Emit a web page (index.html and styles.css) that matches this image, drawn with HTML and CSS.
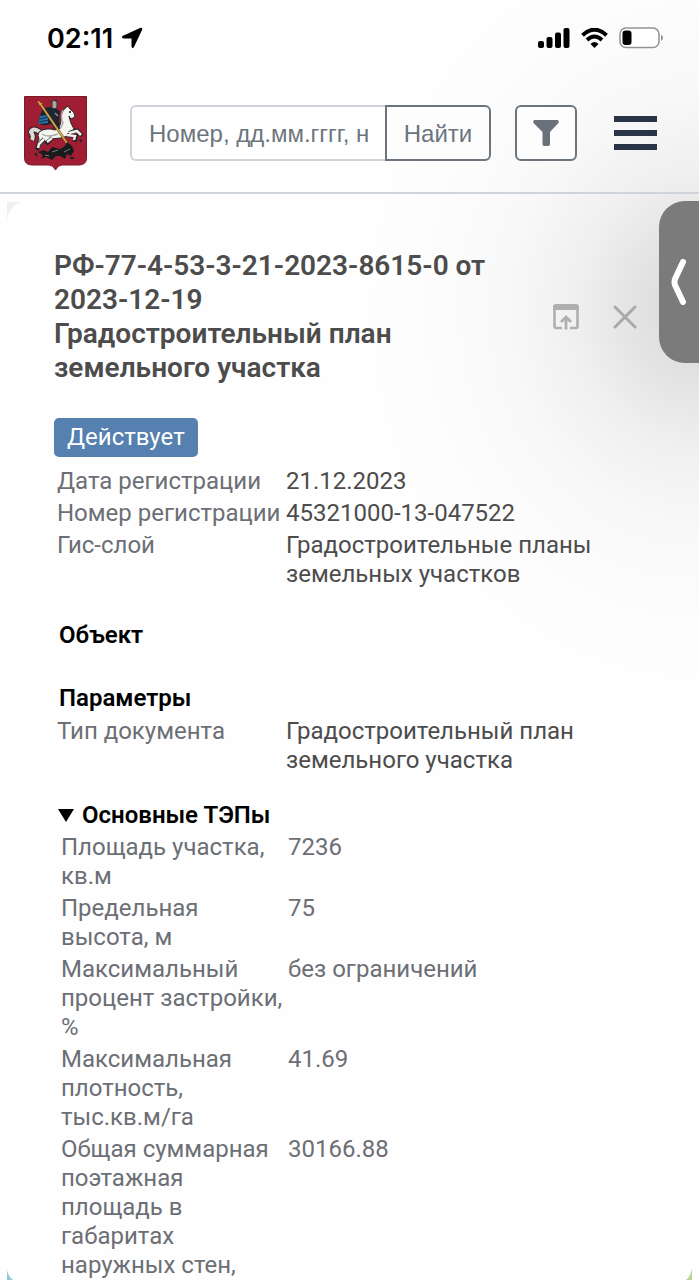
FILE: index.html
```html
<!DOCTYPE html>
<html lang="ru">
<head>
<meta charset="utf-8">
<meta name="viewport" content="width=device-width, initial-scale=1">
<title>Градостроительный план земельного участка</title>
<link rel="stylesheet" href="styles.css">
</head>
<body>
<div class="page">
  <div class="status">
    <div class="status-time">
      <span>02:11</span>
      <svg width="22" height="22" viewBox="0 0 22 22" aria-hidden="true"><path d="M19 1Q22 0 21 3L13 20Q11.500 22.500 10.500 19.500V11.500H2.500Q0 11 1.500 9Z"/></svg>
    </div>
    <div class="status-icons">
      <svg width="32" height="20" viewBox="0 0 32 20" aria-hidden="true"><rect y="13" width="6" height="7" rx="2"/><rect x="8.500" y="9" width="6" height="11" rx="2"/><rect x="17" y="4.500" width="6" height="15.500" rx="2"/><rect x="25.500" width="6" height="20" rx="2"/></svg>
      <svg width="27" height="20" viewBox="0 0 27 20" aria-hidden="true"><path d="M1.500 7.200Q13.500 -3.800 25.500 7.200" fill="none" stroke="#000" stroke-width="4"/><path d="M6 12Q13.500 5 21 12" fill="none" stroke="#000" stroke-width="3.800"/><path d="M9.500 16Q13.500 12 17.500 16L13.500 20Z"/></svg>
      <svg width="45" height="22" viewBox="0 0 45 22" aria-hidden="true"><rect x="1" y="1" width="39" height="19.500" rx="6" fill="#fff" stroke="#929292" stroke-width="1.500"/><rect x="3.500" y="3.500" width="9" height="14.500" rx="3"/><path d="M42 7.500Q46 10.500 42 14Z" fill="#929292"/></svg>
    </div>
  </div>

  <header class="header">
    <a class="crest" href="#" aria-label="Москва">
      <svg width="63" height="75" viewBox="0 0 63 75" aria-hidden="true">
        <path d="M.5.500H62.500V62Q62.500 69 55 69H38Q34 69 31.500 74Q29 69 25 69H8Q.5 69 .5 62Z" fill="#9f1e34" stroke="#7c1a2c"/>
        <path d="M16 36Q9 31 7 36Q10 40 8 44" fill="none" stroke="#2a2526" stroke-width="6"/>
        <path d="M16 36Q9 31 7 36Q10 40 8 44" fill="none" stroke="#dcdad6" stroke-width="4"/>
        <path d="M15 36Q22 31 31 34Q37 32 37 23Q37 14 44 10L46 13Q51 16 51 21L47 23L45 20Q46 27 50 33L47 39L37 42L26 43L20 46L14 53L12 50L15 43Q13 39 15 36Z" fill="#f5f5f2" stroke="#252525"/>
        <path d="M39 14Q36 21 39 27L36 33M18 38Q23 42 34 38" fill="none" stroke="#aaa" stroke-width="1.500"/>
        <circle cx="46" cy="16" r="1"/>
        <path d="M45 37L53 34L58 40M43 39L52 40L51 46M20 43L15 48L13 54M28 42L22 48" fill="none" stroke="#242424" stroke-width="4"/>
        <path d="M45 37L53 35L57 39M43 39L51 40L50 44M20 43L15 48L14 52M28 42L23 46" fill="none" stroke="#f0efeb" stroke-width="2.500"/>
        <path d="M18 14Q24 9 31 12L36 15L35 24L36 33L30 33L28 28L22 29Q13 30 15 23Z" fill="#1b2630"/>
        <path d="M16 20L24 19L24 27L14 28Z" fill="#2b70a3"/>
        <path d="M16 23L24 21M15 26L25 24" stroke="#14304a"/>
        <path d="M28 12V6L30 4L33 6V11L31 13Z" fill="#aaa39e" stroke="#303034"/>
        <path d="M27 6L25 4M30 4L34 5" stroke="#333"/>
        <path d="M30 29L34 34M31 17L34 20" stroke="#8f9295" stroke-width="1.500"/>
        <path d="M15 6L47 53" stroke="#5b431d" stroke-width="2.500"/>
        <path d="M15 6L47 53" stroke="#d9ac48" stroke-width="1.500"/>
        <path d="M14 5L16 9L18 7" fill="none" stroke="#d9ac48"/>
        <path d="M14 56L20 54L24 56L28 51L36 53L41 50L43 46L48 50L50 55L47 60L43 58L41 63L36 60L32 60L28 64L22 61L17 63L19 59Z" fill="#1a1b1d"/>
        <path d="M28 56L34 54M40 56L46 53M21 59L25 60" fill="none" stroke="#777d77"/>
        <path d="M11 57L13 60M46 62L50 62M56 43L57 46" stroke="#2a2024" stroke-width="2"/>
      </svg>
    </a>
    <form class="search" role="search">
      <input class="search-input" type="text" aria-label="Поиск" placeholder="Номер, дд.мм.гггг, название">
      <button class="search-button" type="button">Найти</button>
    </form>
    <button class="filter" type="button" aria-label="Фильтр">
      <svg width="26" height="28" viewBox="0 0 26 28" aria-hidden="true"><path d="M1 1H25Q26.500 3 25 4.500L17 13V25Q17 27 15 27H11Q9.500 27 9.500 25V13L1 4.500Q-.500 3 1 1Z" fill="#6a717a"/></svg>
    </button>
    <button class="menu" type="button" aria-label="Меню"><i></i><i></i><i></i></button>
  </header>

  <main class="panel">
    <div class="title-row">
      <h1 class="title">РФ-77-4-53-3-21-2023-8615-0 от 2023-12-19<br>Градостроительный план земельного участка</h1>
      <div class="actions">
        <button class="icon-button" type="button" aria-label="Открыть">
          <svg width="26" height="26" viewBox="0 0 26 26" aria-hidden="true"><path d="M9 24H3Q1.500 24 1.500 22V3H24.500V22Q24.500 24 23 24H17" fill="none" stroke="#afafaf" stroke-width="2.600"/><path d="M0 6V3Q0 0 3 0H23Q26 0 26 3V6Z" fill="#afafaf"/><path d="M13 25.500V14M8 18L13 13L18 18" fill="none" stroke="#afafaf" stroke-width="2.800"/></svg>
        </button>
        <button class="icon-button" type="button" aria-label="Закрыть">
          <svg width="24" height="24" viewBox="0 0 24 24" aria-hidden="true"><path d="M2 2L22 22M22 2L2 22" fill="none" stroke="#a9a9a9" stroke-width="3" stroke-linecap="round"/></svg>
        </button>
      </div>
    </div>

    <span class="badge">Действует</span>
    <table class="data">
      <tr><th scope="row">Дата регистрации</th><td>21.12.2023</td></tr>
      <tr><th scope="row">Номер регистрации</th><td>45321000-13-047522</td></tr>
      <tr><th scope="row">Гис-слой</th><td>Градостроительные планы земельных участков</td></tr>
    </table>

    <h2 class="heading">Объект</h2>
    <h2 class="heading">Параметры</h2>
    <table class="data">
      <tr><th scope="row">Тип документа</th><td>Градостроительный план земельного участка</td></tr>
    </table>

    <details class="details" open>
      <summary class="summary">Основные ТЭПы</summary>
      <table class="data data-muted">
        <tr><th scope="row">Площадь участка, кв.м</th><td>7236</td></tr>
        <tr><th scope="row">Предельная высота, м</th><td>75</td></tr>
        <tr><th scope="row">Максимальный процент застройки, %</th><td>без ограничений</td></tr>
        <tr><th scope="row">Максимальная плотность, тыс.кв.м/га</th><td>41.69</td></tr>
        <tr><th scope="row">Общая суммарная поэтажная площадь в габаритах наружных стен,</th><td>30166.88</td></tr>
      </table>
    </details>
  </main>

  <button class="drawer" type="button" aria-label="Показать">
    <svg width="16" height="46" viewBox="0 0 16 46" aria-hidden="true"><path d="M12 3L4 20Q3 23 4 26L12 43" fill="none" stroke="#fff" stroke-width="6" stroke-linecap="round" stroke-linejoin="round"/></svg>
  </button>
  <svg class="corner corner-top" width="16" height="18" viewBox="0 0 16 18" aria-hidden="true"><path d="M0 0H16Q3 2 0 18Z" fill="#f0f0ee"/></svg>
  <svg class="corner corner-water" width="6" height="10" viewBox="0 0 6 10" aria-hidden="true"><path d="M0 0Q1 6 6 10H0Z" fill="#8fc9d8"/></svg>
  <svg class="corner corner-park" width="6" height="12" viewBox="0 0 6 12" aria-hidden="true"><path d="M6 0Q5 8 0 12H6Z" fill="#b5d690"/></svg>
</div>
</body>
</html>
```
FILE: styles.css
```css
* {
  box-sizing: border-box;
}

body {
  margin: 0;
  background: #fefefe;
  color: #4c4c4c;
  font-family: Roboto, "Noto Sans", sans-serif;
  font-size: 24px;
  line-height: 29px;
}

button {
  padding: 0;
  border: 0;
  background: none;
  color: inherit;
  font: inherit;
  cursor: pointer;
}

svg {
  display: block;
  flex: none;
}

.page {
  position: relative;
  min-height: 100vh;
  overflow: hidden;
  background: radial-gradient(ellipse 330px 370px at 100% 310px, #d9d9d9 0%, #e2e2e2 18%, #f0f0f0 38%, #f8f8f8 58%, #fcfcfc 80%, #fefefe 100%);
}

.status {
  display: flex;
  align-items: center;
  justify-content: space-between;
  height: 76px;
  padding: 0 35px 0 47px;
  color: #000;
}

.status-time {
  display: flex;
  align-items: center;
  gap: 8px;
  font-family: Inter, sans-serif;
  font-size: 27px;
  font-weight: 600;
}

.status-icons {
  display: flex;
  align-items: center;
  gap: 11px;
}

.header {
  display: flex;
  align-items: center;
  height: 118px;
  padding: 0 42px 2px 24px;
  border-bottom: 2px solid #ced4da;
}

.crest {
  margin-right: 43px;
}

.search {
  display: flex;
  flex: 1;
  min-width: 0;
  height: 56px;
  margin-right: 24px;
  color: #6c757d;
  font-family: "Liberation Sans", Arial, sans-serif;
  font-size: 24px;
}

.search-input {
  flex: 1;
  min-width: 0;
  padding: 0 17px;
  border: 2px solid #ced4da;
  border-right: 0;
  border-radius: 6px 0 0 6px;
  background: #fff;
  color: inherit;
  font: inherit;
}

.search-input::placeholder {
  color: #6c757d;
  opacity: 1;
}

.search-button {
  width: 106px;
  border: 2px solid #6c757d;
  border-radius: 0 6px 6px 0;
}

.search-button,
.filter {
  background: #fdfdfd;
}

.filter {
  display: grid;
  place-items: center;
  width: 62px;
  height: 56px;
  margin-right: 37px;
  border: 2px solid #6c757d;
  border-radius: 6px;
}

.menu {
  display: grid;
  gap: 8px;
  width: 43px;
}

.menu i {
  height: 6px;
  background: #283548;
}

.panel {
  padding: 55px 62px 0 54px;
}

.title-row {
  display: flex;
  align-items: center;
  justify-content: space-between;
  margin-bottom: 33px;
}

.title {
  flex: 1;
  max-width: 450px;
  margin: 0;
  font-size: 28px;
  font-weight: 600;
  line-height: 34px;
}

.actions {
  display: flex;
  align-items: center;
  gap: 34px;
}

.badge {
  display: block;
  width: fit-content;
  padding: 5px 13px;
  border-radius: 5px;
  background: #5580b0;
  color: #fff;
}

.data {
  width: 100%;
  margin-top: 7px;
  border-spacing: 3px;
  table-layout: fixed;
}

.data th,
.data td {
  padding: 0;
  font-weight: 400;
  text-align: left;
  vertical-align: top;
}

.data th {
  width: 226px;
  color: #6c6f75;
}

.data td {
  padding-right: 20px;
}

.data-muted th {
  width: 224px;
}

.data-muted td {
  color: #6c6f75;
}

.heading {
  margin: 29px 5px 34px;
  color: #000;
  font-size: 24px;
  font-weight: 600;
}

.heading + .heading {
  margin: 0 5px;
}

.heading + .data {
  margin-top: 1px;
}

.details {
  padding-left: 4px;
}

.summary {
  display: flex;
  align-items: center;
  gap: 8px;
  margin-top: 23px;
  color: #000;
  font-weight: 600;
  list-style: none;
}

.summary::before {
  border: 8px solid transparent;
  border-top: 13px solid #000;
  border-bottom: 0;
  content: "";
}

.details .data {
  margin-top: 0;
  margin-bottom: -4px;
}

.drawer {
  position: absolute;
  top: 201px;
  right: 0;
  display: grid;
  place-items: center;
  width: 40px;
  height: 162px;
  border-radius: 26px 0 0 26px;
  background: #7b7b7b;
}

.corner {
  position: absolute;
}

.corner-top {
  top: 202px;
  left: 7px;
}

.corner-water {
  bottom: 0;
  left: 7px;
}

.corner-park {
  right: 7px;
  bottom: 0;
}
```
